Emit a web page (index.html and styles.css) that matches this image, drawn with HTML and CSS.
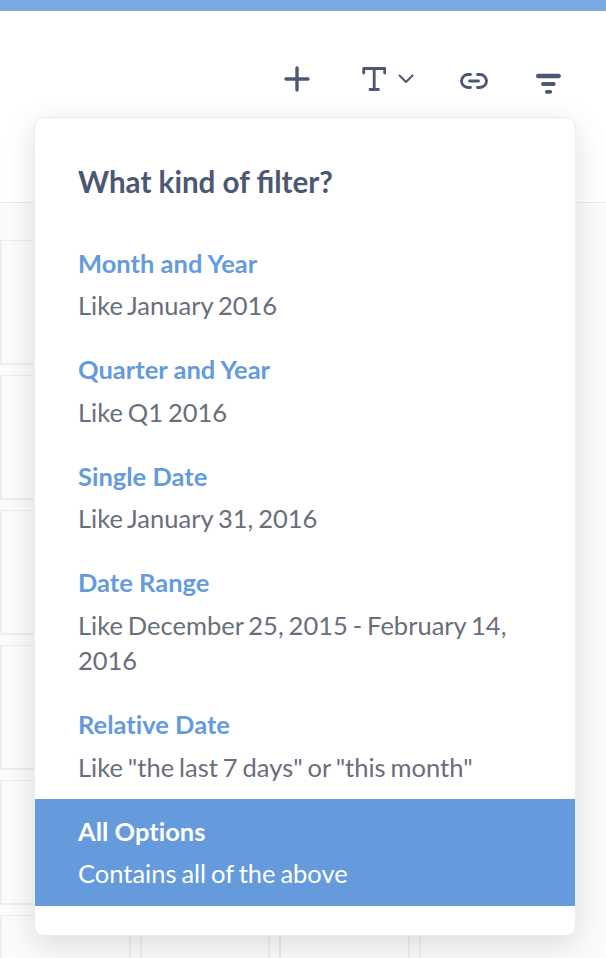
FILE: index.html
```html
<!DOCTYPE html>
<html lang="en">
<head>
    <meta charset="UTF-8">
    <meta name="viewport" content="width=device-width, initial-scale=1.0">
    <title>Dashboard - Add a filter</title>
    <link rel="stylesheet" href="styles.css">
</head>
<body>
    <div class="edit-bar"></div>

    <header class="toolbar">
        <button class="tool-button" aria-label="Add a question">
            <svg width="26" height="26" viewBox="0 0 26 26"><path d="M13 2v22M2 13h22" stroke-width="3.4"/></svg>
        </button>
        <button class="tool-button text-button" aria-label="Add text">
            <svg width="24" height="26" viewBox="0 0 24 26"><path d="M1.7 7V2.5h21V7M12.2 2.5v21M8 23.5h8.5" stroke-width="2.8"/></svg>
            <svg width="16" height="10" viewBox="0 0 16 10"><path d="M1.5 1.5L8 8l6.5-6.5" stroke-width="2"/></svg>
        </button>
        <button class="tool-button link-button" aria-label="Add a link">
            <svg width="28" height="16" viewBox="0 0 28 16"><path d="M10.5 1.5H8a6.5 6.5 0 0 0 0 13h2.5M17.5 1.5H20a6.5 6.5 0 0 1 0 13h-2.5M9.5 8h9" stroke-width="2.8"/></svg>
        </button>
        <button class="tool-button filter-button" aria-label="Add a filter">
            <svg width="26" height="22" viewBox="0 0 26 22"><path d="M2.2 3h20.5" stroke-width="4.4"/><path d="M7 11h10.8M10.8 18.8h3.4" stroke-width="3.8"/></svg>
        </button>
    </header>

    <main class="dashboard">
        <div class="grid">
            <div class="cell"></div><div class="cell"></div><div class="cell"></div><div class="cell"></div>
            <div class="cell"></div><div class="cell"></div><div class="cell"></div><div class="cell"></div>
            <div class="cell"></div><div class="cell"></div><div class="cell"></div><div class="cell"></div>
            <div class="cell"></div><div class="cell"></div><div class="cell"></div><div class="cell"></div>
            <div class="cell"></div><div class="cell"></div><div class="cell"></div><div class="cell"></div>
            <div class="cell"></div><div class="cell"></div><div class="cell"></div><div class="cell"></div>
        </div>
    </main>

    <div class="popover">
        <h3>What kind of filter?</h3>
        <ul class="options">
            <li class="option">
                <div class="option-name">Month and Year</div>
                <div class="option-description">Like January 2016</div>
            </li>
            <li class="option">
                <div class="option-name">Quarter and Year</div>
                <div class="option-description">Like Q1 2016</div>
            </li>
            <li class="option">
                <div class="option-name">Single Date</div>
                <div class="option-description">Like January 31, 2016</div>
            </li>
            <li class="option">
                <div class="option-name">Date Range</div>
                <div class="option-description">Like December 25, 2015 - February 14, 2016</div>
            </li>
            <li class="option">
                <div class="option-name">Relative Date</div>
                <div class="option-description">Like "the last 7 days" or "this month"</div>
            </li>
            <li class="option active">
                <div class="option-name">All Options</div>
                <div class="option-description">Contains all of the above</div>
            </li>
        </ul>
    </div>
</body>
</html>
```
FILE: styles.css
```css
* {
    margin: 0;
    padding: 0;
    box-sizing: border-box;
}

body {
    position: relative;
    height: 958px;
    overflow: hidden;
    display: flex;
    flex-direction: column;
    background-color: #f9fbfc;
    font-family: Lato, sans-serif;
}

.edit-bar {
    height: 11px;
    background-color: #7aa9e1;
}

.toolbar {
    height: 192px;
    padding: 55px 44px 0 284px;
    display: flex;
    align-items: flex-start;
    background-color: white;
    border-bottom: 1px solid #eaeaec;
}

.tool-button {
    height: 26px;
    border: none;
    background: transparent;
    display: flex;
    align-items: center;
    cursor: pointer;
}

.tool-button svg {
    fill: none;
    stroke: #4c5773;
    stroke-linecap: round;
    stroke-linejoin: round;
}

.text-button {
    margin-left: 52px;
    gap: 12px;
}

.link-button {
    margin: 2px 0 0 46px;
}

.filter-button {
    margin: 5px 0 0 48px;
}

.dashboard {
    flex: 1;
    padding-top: 37px;
    overflow: hidden;
}

.grid {
    display: grid;
    grid-template-columns: repeat(4, 130.7px);
    grid-auto-rows: 125px;
    gap: 10px 9px;
}

.cell {
    border: 2px solid #eeeef0;
    border-top-width: 1px;
}

.cell:nth-child(4n) {
    border-width: 0 0 0 2px;
}

.popover {
    position: absolute;
    top: 117px;
    left: 34px;
    width: 542px;
    height: 819px;
    background-color: white;
    border: 1px solid #ececee;
    border-radius: 10px;
    box-shadow: 0 8px 30px rgba(0, 0, 0, 0.13);
}

.popover h3 {
    padding: 44px 43px 0;
    font-size: 29.6px;
    line-height: 40px;
    color: #4c5773;
}

.options {
    margin-top: 29px;
    list-style: none;
}

.option {
    padding: 14.5px 43px 13.5px;
    font-size: 25.5px;
    line-height: 35.5px;
    color: #696e7b;
    cursor: pointer;
}

.option-name {
    margin-bottom: 7px;
    font-weight: bold;
    font-variant-ligatures: none;
    color: #649bdc;
}

.option-description {
    margin-bottom: 0.5px;
    word-spacing: -1.6px;
}

.option.active {
    background-color: #659bdc;
    color: white;
}

.option.active .option-name {
    color: white;
}
```
